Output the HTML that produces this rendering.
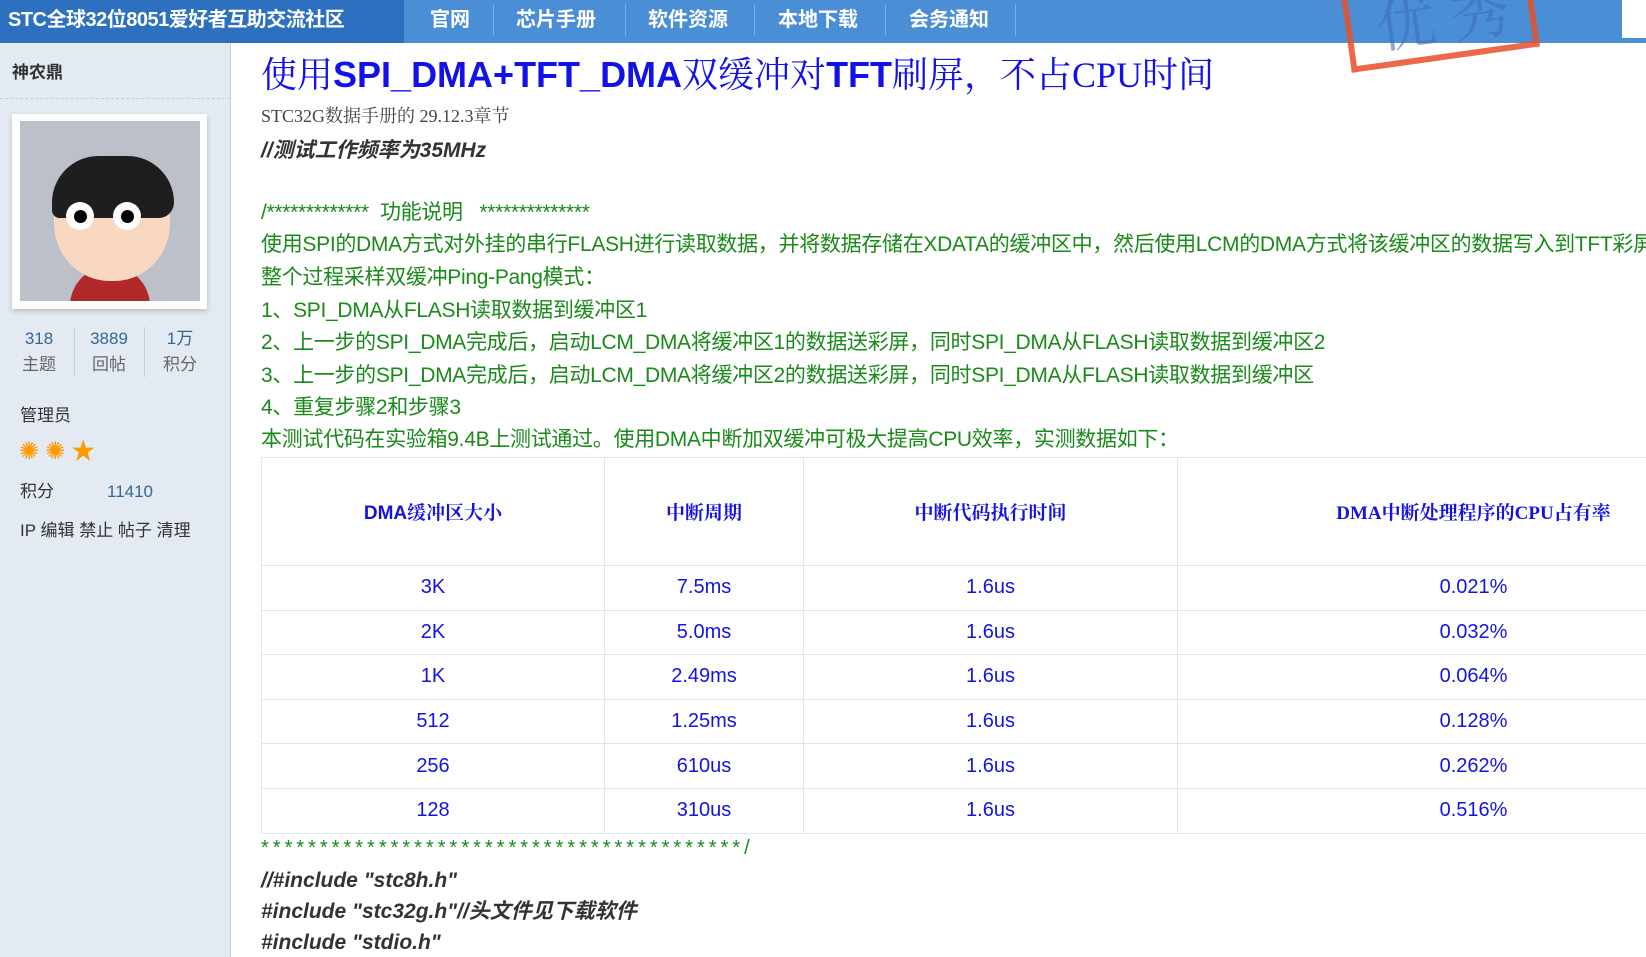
<!DOCTYPE html>
<html><head><meta charset="utf-8"><style>
*{margin:0;padding:0;box-sizing:border-box}
body{width:1646px;height:957px;overflow:hidden;background:#fff;font-family:"Liberation Sans","Noto Sans CJK SC",sans-serif;position:relative}
.a{position:absolute;white-space:nowrap;line-height:1.2}
#hdr{position:absolute;left:0;top:0;width:1646px;height:43px;background:#4a8ed6}
#logo{position:absolute;left:0;top:0;width:404px;height:43px;background:#2d70c0}
.nav{color:#fff;font-weight:bold;font-size:20px;top:8px}
.sep{position:absolute;top:4px;width:1px;height:32px;background:#7aaee3}
#side{position:absolute;left:0;top:43px;width:231px;height:914px;background:#e3eaf2;border-right:1px solid #bcd0e2}
.g{color:#1a8a1a;font-size:21px;line-height:26px;letter-spacing:-0.3px}
.tb{position:absolute;left:261px;top:457px;width:1508px;border-collapse:collapse;table-layout:fixed}
.tb td{border:1px solid #dde6ef;text-align:center;color:#1414e0;font-size:20px;height:44.6px}
.tb tr.h td{height:108px;font-family:"Liberation Serif","Noto Serif CJK SC",serif;font-weight:bold;font-size:19px}
.code{color:#333;font-style:italic;font-weight:bold;font-size:21px;line-height:26px}
</style></head><body>
<div id="hdr"><div id="logo"></div></div>
<div class="a" style="left:8px;top:8px;color:#fff;font-weight:bold;font-size:20px;letter-spacing:-0.5px">STC全球32位8051爱好者互助交流社区</div>
<div class="a nav" style="left:430px">官网</div><div class="sep" style="left:493px"></div>
<div class="a nav" style="left:516px">芯片手册</div><div class="sep" style="left:625px"></div>
<div class="a nav" style="left:648px">软件资源</div><div class="sep" style="left:754px"></div>
<div class="a nav" style="left:778px">本地下载</div><div class="sep" style="left:885px"></div>
<div class="a nav" style="left:909px">会务通知</div><div class="sep" style="left:1015px"></div>
<div class="a" style="left:1622px;top:0;width:24px;height:38px;background:#fff"></div>
<div class="a" style="left:1345px;top:-25px;width:190px;height:85px;border:6px solid #e8502a;border-top:none;transform:rotate(-8deg);opacity:.85"></div>
<div class="a" style="left:1375px;top:-22px;color:#3e6fb8;font-size:60px;font-family:'Noto Serif CJK SC',serif;transform:rotate(-8deg);opacity:.6">优 秀</div>

<div id="side"></div>
<div class="a" style="left:12px;top:63px;font-weight:bold;font-size:17px;color:#333">神农鼎</div>
<div class="a" style="left:0;top:98px;width:230px;border-top:1px dashed #c8cdd2"></div>
<div class="a" style="left:12px;top:114px;width:195px;height:195px;background:#fff;box-shadow:0 2px 5px rgba(0,0,0,.2)"></div>
<div class="a" style="left:20px;top:121px;width:180px;height:180px;background:#bcc0c9;overflow:hidden">
<div class="a" style="left:50px;top:145px;width:80px;height:50px;border-radius:40px 40px 0 0;background:#b0282a"></div>
<div class="a" style="left:34px;top:40px;width:116px;height:120px;border-radius:45% 45% 48% 48%;background:#f8d8c0"></div>
<div class="a" style="left:32px;top:35px;width:122px;height:62px;border-radius:60px 60px 20px 10px;background:#1e1e1e"></div>
<div class="a" style="left:46px;top:81px;width:28px;height:28px;border-radius:50%;background:#fff"></div>
<div class="a" style="left:54px;top:89px;width:13px;height:13px;border-radius:50%;background:#000"></div>
<div class="a" style="left:93px;top:81px;width:28px;height:28px;border-radius:50%;background:#fff"></div>
<div class="a" style="left:101px;top:89px;width:13px;height:13px;border-radius:50%;background:#000"></div>
</div>
<div class="a" style="left:0;top:329px;width:78px;text-align:center;color:#336699;font-size:17px">318</div>
<div class="a" style="left:0;top:355px;width:78px;text-align:center;color:#666;font-size:17px">主题</div>
<div class="a" style="left:74px;top:327px;width:1px;height:50px;background:#ccc"></div>
<div class="a" style="left:72px;top:329px;width:74px;text-align:center;color:#336699;font-size:17px">3889</div>
<div class="a" style="left:72px;top:355px;width:74px;text-align:center;color:#666;font-size:17px">回帖</div>
<div class="a" style="left:144px;top:327px;width:1px;height:50px;background:#ccc"></div>
<div class="a" style="left:144px;top:329px;width:72px;text-align:center;color:#336699;font-size:17px">1万</div>
<div class="a" style="left:144px;top:355px;width:72px;text-align:center;color:#666;font-size:17px">积分</div>
<div class="a" style="left:20px;top:406px;color:#333;font-size:17px">管理员</div>
<div class="a" style="left:19px;top:438px;color:#f90;font-size:24px;letter-spacing:6px">✺✺★</div>
<div class="a" style="left:20px;top:482px;color:#333;font-size:17px">积分</div>
<div class="a" style="left:107px;top:482px;color:#336699;font-size:17px">11410</div>
<div class="a" style="left:20px;top:521px;color:#333;font-size:17px">IP 编辑 禁止 帖子 清理</div>

<div class="a" style="left:261px;top:53px;color:#1212e8;font-size:36px;font-family:'Liberation Serif','Noto Serif CJK SC',serif">使用<b style="font-family:'Liberation Sans',sans-serif">SPI_DMA+TFT_DMA</b>双缓冲对<b style="font-family:'Liberation Sans',sans-serif">TFT</b>刷屏，不占CPU时间</div>
<div class="a" style="left:261px;top:106px;color:#444;font-size:18px;font-family:'Liberation Serif','Noto Serif CJK SC',serif">STC32G数据手册的 29.12.3章节</div>
<div class="a code" style="left:261px;top:138px">//测试工作频率为35MHz</div>
<div class="a g" style="left:261px;top:200px">/*************&nbsp; 功能说明 &nbsp; **************</div>
<div class="a g" style="left:261px;top:232px">使用SPI的DMA方式对外挂的串行FLASH进行读取数据，并将数据存储在XDATA的缓冲区中，然后使用LCM的DMA方式将该缓冲区的数据写入到TFT彩屏</div>
<div class="a g" style="left:261px;top:265px">整个过程采样双缓冲Ping-Pang模式：</div>
<div class="a g" style="left:261px;top:298px">1、SPI_DMA从FLASH读取数据到缓冲区1</div>
<div class="a g" style="left:261px;top:330px">2、上一步的SPI_DMA完成后，启动LCM_DMA将缓冲区1的数据送彩屏，同时SPI_DMA从FLASH读取数据到缓冲区2</div>
<div class="a g" style="left:261px;top:363px">3、上一步的SPI_DMA完成后，启动LCM_DMA将缓冲区2的数据送彩屏，同时SPI_DMA从FLASH读取数据到缓冲区</div>
<div class="a g" style="left:261px;top:395px">4、重复步骤2和步骤3</div>
<div class="a g" style="left:261px;top:427px">本测试代码在实验箱9.4B上测试通过。使用DMA中断加双缓冲可极大提高CPU效率，实测数据如下：</div>

<table class="tb">
<colgroup><col style="width:343px"><col style="width:199px"><col style="width:374px"><col style="width:592px"></colgroup>
<tr class="h"><td><span style="font-family:'Liberation Sans',sans-serif">DMA</span>缓冲区大小</td><td>中断周期</td><td>中断代码执行时间</td><td>DMA中断处理程序的CPU占有率</td></tr>
<tr><td>3K</td><td>7.5ms</td><td>1.6us</td><td>0.021%</td></tr>
<tr><td>2K</td><td>5.0ms</td><td>1.6us</td><td>0.032%</td></tr>
<tr><td>1K</td><td>2.49ms</td><td>1.6us</td><td>0.064%</td></tr>
<tr><td>512</td><td>1.25ms</td><td>1.6us</td><td>0.128%</td></tr>
<tr><td>256</td><td>610us</td><td>1.6us</td><td>0.262%</td></tr>
<tr><td>128</td><td>310us</td><td>1.6us</td><td>0.516%</td></tr>
</table>
<div class="a g" style="left:261px;top:835px;font-size:20px;letter-spacing:4px">*****************************************/</div>
<div class="a code" style="left:261px;top:868px">//#include "stc8h.h"</div>
<div class="a code" style="left:261px;top:899px">#include "stc32g.h"//头文件见下载软件</div>
<div class="a code" style="left:261px;top:930px">#include "stdio.h"</div>
</body></html>
